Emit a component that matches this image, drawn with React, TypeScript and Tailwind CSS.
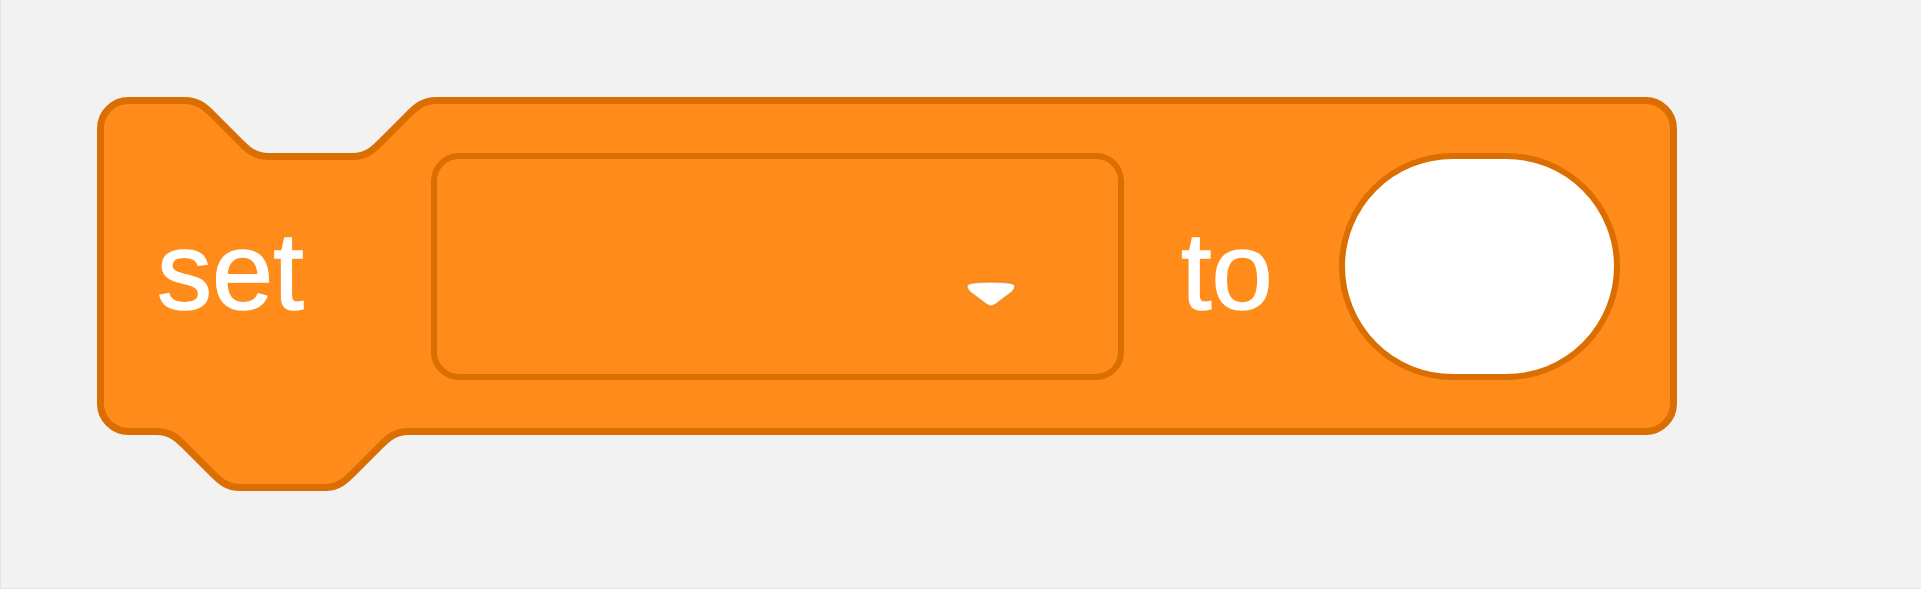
import React from 'react';

const FILL = '#FF8C1A';
const STROKE = '#DB6E00';

// stack block outline: 1580 x 338 body + 56px bottom tab
const BlockShape: React.FC = () => {
  const o = 3.5;
  const W = 1580;
  const H = 338;
  const d = [
    `M ${o} ${o + 28}`,
    `A 28 28 0 0 1 ${o + 28} ${o}`,
    `H ${o + 84}`,
    'c 14 0 21 7 28 14',
    'l 28 28',
    'c 7 7 14 14 28 14',
    'h 84',
    'c 14 0 21 -7 28 -14',
    'l 28 -28',
    'c 7 -7 14 -14 28 -14',
    `H ${W - o - 28}`,
    'a 28 28 0 0 1 28 28',
    `V ${H - o - 28}`,
    'a 28 28 0 0 1 -28 28',
    `H ${o + 308}`,
    'c -14 0 -21 7 -28 14',
    'l -28 28',
    'c -7 7 -14 14 -28 14',
    'h -84',
    'c -14 0 -21 -7 -28 -14',
    'l -28 -28',
    'c -7 -7 -14 -14 -28 -14',
    `H ${o + 28}`,
    'a 28 28 0 0 1 -28 -28',
    'Z',
  ].join(' ');
  return (
    <svg className="absolute left-0 top-0" width={W} height={H + 60} viewBox={`0 0 ${W} ${H + 60}`}>
      <path d={d} fill={FILL} stroke={STROKE} strokeWidth={7} strokeLinejoin="round" />
    </svg>
  );
};

const DropdownArrow: React.FC = () => (
  <svg width="56" height="30" viewBox="0 0 56 30">
    <path
      d="M4 7 Q4 3 28 3 Q52 3 52 7 Q52 10 49 13 L33 25 Q28 29 23 25 L7 13 Q4 10 4 7 Z"
      fill="#ffffff"
      stroke={STROKE}
      strokeOpacity="0.45"
      strokeWidth="2"
    />
  </svg>
);

export default function App() {
  return (
    <div className="w-full h-[589px] bg-[#f2f2f2] border-l border-b border-[#e4e4e4] overflow-hidden pt-[97px] pl-[96px]">
      <div className="relative w-[1580px] h-[398px]">
        <BlockShape />

        <div
          className="relative h-[338px] flex items-center text-white text-[110px] leading-none [-webkit-text-stroke:1.5px_white]"
          style={{ fontFamily: '"Liberation Sans", Arial, sans-serif' }}
        >
          <span className="w-[334px] pl-[60px] pt-[10px]">set</span>

          <div className="w-[693px] h-[227px] rounded-[28px] border-[6px] border-[#DB6E00] bg-[#FF8C1A] flex items-center justify-end pr-[99px] pt-[56px]">
            <DropdownArrow />
          </div>

          <span className="w-[215px] pl-[57px] pt-[10px]">to</span>

          <div className="w-[281px] h-[227px] rounded-full border-[6px] border-[#DB6E00] bg-white" />
        </div>
      </div>
    </div>
  );
}
